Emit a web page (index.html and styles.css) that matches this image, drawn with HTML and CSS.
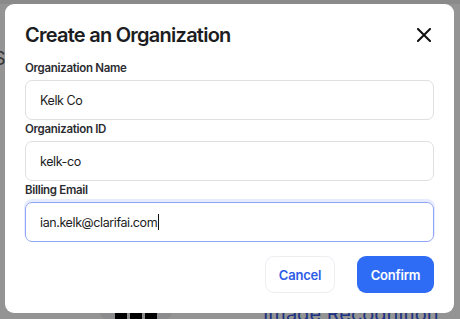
FILE: index.html
```html
<!DOCTYPE html>
<html lang="en">

<head>
    <meta charset="UTF-8">
    <meta name="viewport" content="width=device-width, initial-scale=1.0">
    <title>Create an Organization</title>
    <link rel="stylesheet" href="styles.css">
</head>

<body>
    <div class="page">
        <div class="pageTop"></div>
        <div class="pageSide">S</div>
        <div class="pageCard">
            <div class="cardLogo">
                <span></span><span></span><span></span>
            </div>
            <div class="cardTitle">Image Recognition</div>
        </div>
    </div>

    <div class="overlay">
        <div class="modal">
            <div class="modalHead">
                <h2>Create an Organization</h2>
                <a class="closeBtn" href="javascript:;">
                    <svg width="14" height="14" viewBox="0 0 14 14">
                        <path d="M1 1L13 13M13 1L1 13" stroke="#111" stroke-width="2" stroke-linecap="square" fill="none"/>
                    </svg>
                </a>
            </div>
            <div class="field">
                <label>Organization Name</label>
                <div class="input">Kelk Co</div>
            </div>
            <div class="field">
                <label>Organization ID</label>
                <div class="input">kelk-co</div>
            </div>
            <div class="field">
                <label>Billing Email</label>
                <div class="input focus">ian.kelk@clarifai.com<i class="caret"></i></div>
            </div>
            <div class="actions">
                <a class="btn cancel" href="javascript:;">Cancel</a>
                <a class="btn confirm" href="javascript:;">Confirm</a>
            </div>
        </div>
    </div>
</body>

</html>
```
FILE: styles.css
```css
* {
    margin: 0;
    padding: 0;
    box-sizing: border-box;
}

body {
    font-family: Inter, "Noto Sans", sans-serif;
    background: #fff;
    width: 460px;
    height: 319px;
    overflow: hidden;
}

a {
    text-decoration: none;
}

/* page under the overlay */
.page {
    height: 319px;
    display: flex;
    flex-direction: column;
}

.pageTop {
    height: 4px;
    background: #eee;
}

.pageSide {
    margin-top: 44px;
    font-size: 18px;
    color: #555;
    margin-left: -6px;
}

.pageCard {
    margin-top: auto;
    height: 22px;
    display: flex;
    align-items: flex-start;
    padding-left: 100px;
}

.cardLogo {
    width: 72px;
    height: 30px;
    border-radius: 50%;
    background: #f2f2f4;
    display: flex;
    justify-content: center;
    gap: 3px;
    padding-top: 10px;
}

.cardLogo span {
    width: 12px;
    height: 20px;
    border-radius: 6px 6px 0 0;
    background: #000;
}

.cardTitle {
    margin-left: 91px;
    margin-top: 5px;
    font-size: 20px;
    color: #3558e0;
}

/* modal */
.overlay {
    position: fixed;
    inset: 0;
    background: rgba(0, 0, 0, .42);
    padding: 4px 6px 6px 5px;
}

.modal {
    height: 309px;
    background: #fff;
    border-radius: 9px;
    padding: 16px 20px 0 20px;
}

.modalHead {
    display: flex;
    justify-content: space-between;
    align-items: center;
    height: 30px;
    margin-bottom: 10px;
}

.modalHead h2 {
    font-size: 20px;
    font-weight: 600;
    color: #1c1d22;
    letter-spacing: -0.75px;
}

.closeBtn {
    display: flex;
    margin-right: 3px;
}

.field {
    margin-bottom: 1px;
}

.field label {
    display: block;
    font-size: 11.5px;
    font-weight: 600;
    color: #2b2c31;
    letter-spacing: -0.3px;
    line-height: 16px;
    margin-bottom: 4px;
}

.input {
    height: 40px;
    border: 1px solid #dfe0e4;
    border-radius: 7px;
    padding: 0 14px;
    display: flex;
    align-items: center;
    font-size: 12.5px;
    letter-spacing: -0.4px;
    color: #1c1d22;
}

.input.focus {
    border-color: #8fa6f5;
    box-shadow: 0 -2px 0 1px #e6ebfd;
}

.caret {
    width: 1px;
    height: 16px;
    background: #111;
    margin-left: 1px;
}

.actions {
    display: flex;
    justify-content: flex-end;
    gap: 22px;
    margin-top: 14px;
}

.btn {
    height: 37px;
    border-radius: 9px;
    display: flex;
    align-items: center;
    justify-content: center;
    font-size: 13px;
    font-weight: 600;
    letter-spacing: -0.2px;
}

.cancel {
    width: 70px;
    border: 1px solid #eceef2;
    color: #2d5ce6;
}

.confirm {
    width: 77px;
    background: #2f6cf5;
    color: #fff;
}
```
